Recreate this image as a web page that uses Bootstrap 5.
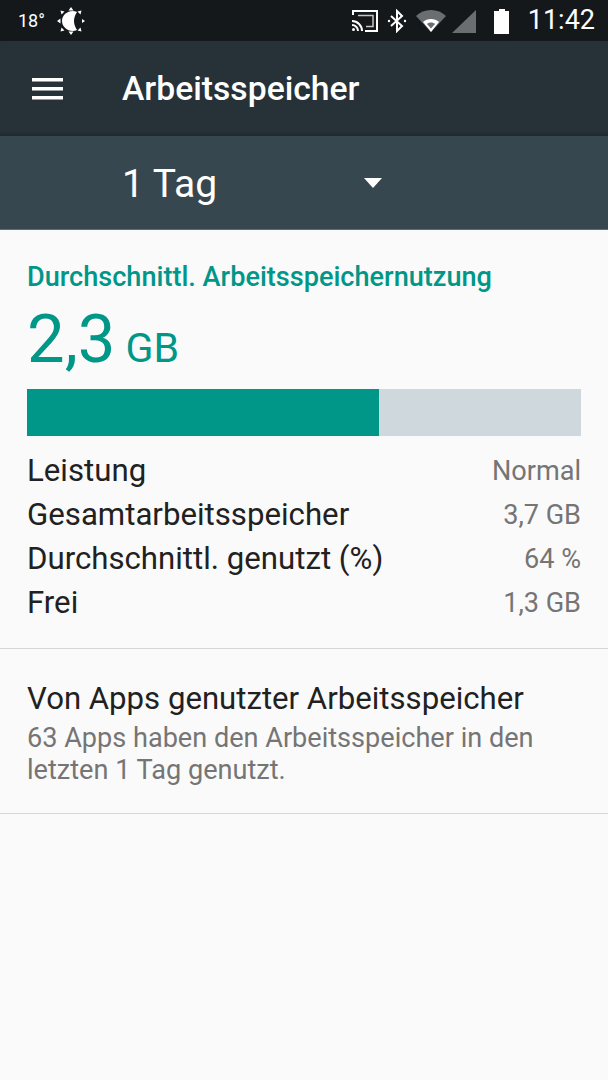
<!DOCTYPE html>
<html lang="de">
<head>
    <meta charset="UTF-8">
    <meta name="viewport" content="width=device-width, initial-scale=1">
    <link rel="stylesheet" href="https://cdn.jsdelivr.net/npm/bootstrap@5.3.0/dist/css/bootstrap.min.css">
    <title>Arbeitsspeicher</title>
    <style>
        html, body { height: 100%; }
        body { font-family: Roboto, "Liberation Sans", sans-serif; background: #fafafa; color: #212121; overflow: hidden; }

        /* status bar */
        .status-bar { height: 41px; background: #14181b; color: #fff; padding: 0 13px 0 18px; }
        .status-temp { font-size: 18px; line-height: 1; }
        .moon-icon { margin-left: 11px; }
        .status-time { font-size: 27px; line-height: 1; font-weight: 400; margin-left: 17px; }

        /* toolbar */
        .app-bar { height: 95px; background: #263238; color: #fff; padding-left: 32px; box-shadow: inset 0 -6px 6px -6px rgba(0,0,0,.35); }
        .app-title { font-size: 33.7px; font-weight: 500; margin-left: 58px; line-height: 1; }
        .filter-bar { height: 94px; background: #37474f; color: #fff; padding-left: 122px; border-bottom: 1px solid #5f6d74; }
        .filter-text { font-size: 39px; width: 242px; line-height: 1; font-weight: 400; padding-top: 4px; }

        /* summary */
        .summary { height: 419px; padding: 33px 27px 0; border-bottom: 1px solid #d6d6d6; }
        .summary-title { font-size: 27.1px; font-weight: 500; color: #009688; line-height: 28px; }
        .big-value { color: #009688; line-height: 1; margin-top: 15px; }
        .big-num { font-size: 67px; }
        .big-unit { font-size: 41px; margin-left: 10px; }
        .mem-bar { height: 47px; background: #cfd8dc; border-radius: 0; margin-top: 16px; }
        .mem-bar .progress-bar { background: #009688; }
        .stat-rows { margin-top: 13px; }
        .stat-row { height: 44px; font-size: 31.2px; line-height: 44px; }
        .stat-val { font-size: 27.1px; color: #757575; }

        /* apps */
        .apps-block { height: 165px; padding: 32px 27px 0; border-bottom: 1px solid #d6d6d6; }
        .apps-title { font-size: 31.15px; line-height: 36px; }
        .apps-sub { font-size: 27.1px; line-height: 32px; color: #757575; margin-top: 5px; }
    </style>
</head>
<body>

<div class="status-bar d-flex align-items-center">
    <span class="status-temp">18°</span>
    <svg class="moon-icon" width="30" height="30" viewBox="0 0 30 30" fill="#fff">
        <path d="M21 6C14 3 6 8 6 15s8 12 15 9C19 21 18 18 18 15s1-6 3-9z"/>
        <path d="M15 1l2.500 3.500h-5zM15 29l2.500-3.500h-5zM1 15l3.500-2.500v5zM29 15l-3-2v4zM4.500 4.500l4 1-3 3zM25.500 4.500l-4 1 3 3zM4.500 25.500l4-1-3-3zM25.500 25.500l-4-1 3-3z"/>
    </svg>
    <div class="ms-auto d-flex align-items-center">
        <svg width="28" height="24" viewBox="0 0 28 24" fill="none" stroke="#fff" stroke-width="2">
            <path d="M2 6V2h24v20H14"/>
            <path d="M7 6.500h15v11h-7" stroke-width="1.500" opacity=".75"/>
            <path d="M1 12a10 10 0 0 1 10 10M1 16a6 6 0 0 1 6 6"/>
            <circle cx="2.500" cy="20.500" r="1.500" fill="#fff" stroke="none"/>
        </svg>
        <svg class="ms-2" width="20" height="24" viewBox="0 0 20 24" fill="none" stroke="#fff" stroke-width="2">
            <path d="M4 7l11 10-5 5V2l5 5-11 10"/>
            <circle cx="2" cy="12" r="1.200" fill="#fff" stroke="none"/>
            <circle cx="18" cy="12" r="1.200" fill="#fff" stroke="none"/>
        </svg>
        <svg class="ms-2" width="32" height="24" viewBox="0 0 32 24">
            <path d="M1 7C5 3 10 1 16 1s11 2 15 6L16 23z" fill="#6b6e70"/>
            <path d="M8 13c2-2 5-3 8-3s6 1 8 3l-8 10z" fill="#fff"/>
            <path d="M12 15c1-1 2.500-1.500 4-1.500s3 .5 4 1.500l-4 4.500z" fill="#6b6e70"/>
        </svg>
        <svg class="ms-1" width="26" height="24" viewBox="0 0 26 24"><path d="M25 1v23H1z" fill="#6b6e70"/></svg>
        <svg class="ms-3" width="18" height="26" viewBox="0 0 18 26" fill="#fff"><path d="M6 1h6v2h4v23H1V3h5z"/></svg>
        <span class="status-time">11:42</span>
    </div>
</div>

<div class="app-bar d-flex align-items-center">
    <svg width="32" height="22" viewBox="0 0 32 22" fill="#fff">
        <rect y="0" width="31" height="3.500"/>
        <rect y="9" width="31" height="3.500"/>
        <rect y="18" width="31" height="3.500"/>
    </svg>
    <span class="app-title">Arbeitsspeicher</span>
</div>

<div class="filter-bar d-flex align-items-center">
    <span class="filter-text">1 Tag</span>
    <svg width="18" height="10" viewBox="0 0 18 10" fill="#fff"><path d="M0 0h18L9 10z"/></svg>
</div>

<div class="summary">
    <div class="summary-title">Durchschnittl. Arbeitsspeichernutzung</div>
    <div class="big-value"><span class="big-num">2,3</span><span class="big-unit">GB</span></div>
    <div class="progress mem-bar">
        <div class="progress-bar" style="width: 63.6%"></div>
    </div>
    <div class="stat-rows">
        <div class="stat-row d-flex justify-content-between"><span>Leistung</span><span class="stat-val">Normal</span></div>
        <div class="stat-row d-flex justify-content-between"><span>Gesamtarbeitsspeicher</span><span class="stat-val">3,7 GB</span></div>
        <div class="stat-row d-flex justify-content-between"><span>Durchschnittl. genutzt (%)</span><span class="stat-val">64 %</span></div>
        <div class="stat-row d-flex justify-content-between"><span>Frei</span><span class="stat-val">1,3 GB</span></div>
    </div>
</div>

<div class="apps-block">
    <div class="apps-title">Von Apps genutzter Arbeitsspeicher</div>
    <div class="apps-sub">63 Apps haben den Arbeitsspeicher in den<br>letzten 1 Tag genutzt.</div>
</div>

<script src="https://cdn.jsdelivr.net/npm/bootstrap@5.3.0/dist/js/bootstrap.bundle.min.js"></script>
</body>
</html>
